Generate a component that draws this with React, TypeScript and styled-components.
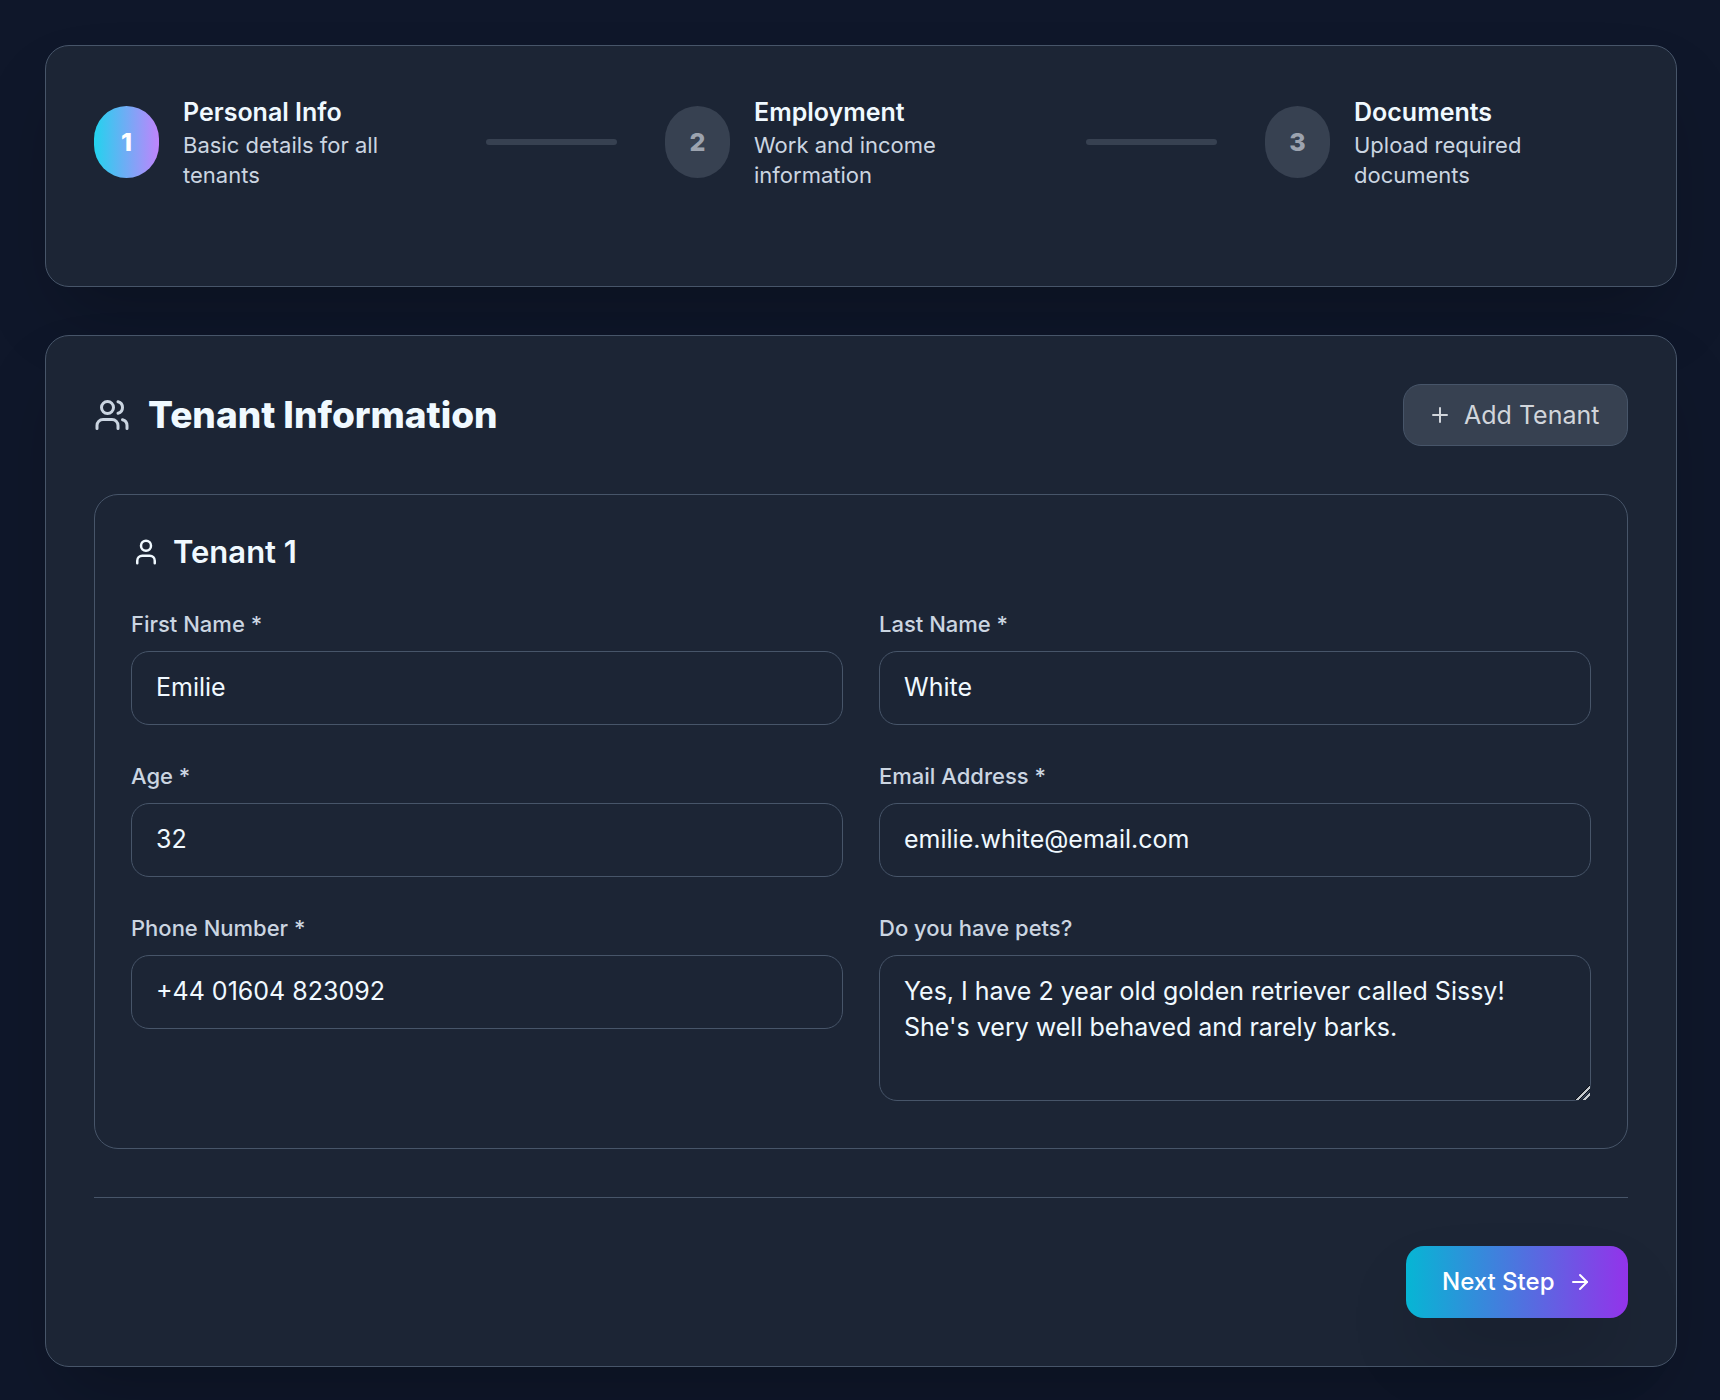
import React, { useId } from "react";
import styled, { createGlobalStyle, css } from "styled-components";
import { ArrowRight, Plus, User, Users } from "lucide-react";

const color = {
  page: "#0f172a",
  panel: "#1c2535",
  line: "#475569",
  heading: "#f0f9ff",
  body: "#cbd5e1",
  muted: "#374151",
  mutedText: "#9ca3af",
};

const GlobalStyle = createGlobalStyle`
  *, *::before, *::after { box-sizing: border-box; }
  body {
    margin: 0;
    background: ${color.page};
    color: ${color.heading};
    font-family: Inter, "Open Sans", sans-serif;
    font-size: 25px;
    line-height: 36px;
  }
  button, input, textarea { font: inherit; color: inherit; margin: 0; }
  h2, h3, p, ol { margin: 0; padding: 0; }
`;

const Page = styled.main`
  min-height: 100vh;
  padding: 45px 43px 33px 45px;
  display: flex;
  flex-direction: column;
  gap: 48px;
`;

const panel = css`
  border: 1px solid ${color.line};
  border-radius: 24px;
  background: ${color.panel};
`;

const Card = styled.section`
  ${panel}
  padding: 48px;
  box-shadow: 0 37px 75px -18px rgba(0, 0, 0, 0.25);
`;

const StepList = styled.ol`
  list-style: none;
  display: flex;
  align-items: center;
  margin-bottom: 48px;
`;

const StepItem = styled.li<{ $grow: number }>`
  flex: ${(p) => p.$grow} 1 0;
  min-width: 0;
  display: flex;
  align-items: center;
  gap: 24px;
`;

const StepBadge = styled.span<{ $active?: boolean }>`
  flex: none;
  width: 65px;
  height: 72px;
  border-radius: 50% / 46%;
  display: flex;
  align-items: center;
  justify-content: center;
  font-weight: 800;
  color: ${(p) => (p.$active ? "#ffffff" : color.mutedText)};
  background: ${(p) =>
    p.$active ? "linear-gradient(to right, #22d3ee, #c084fc)" : color.muted};
`;

const StepTitle = styled.h3`
  font-size: 25px;
  line-height: 36px;
  font-weight: 600;
`;

const StepText = styled.p`
  max-width: 240px;
  font-size: 22px;
  line-height: 30px;
  color: ${color.body};
`;

const Connector = styled.li`
  flex: 131 1 0;
  height: 6px;
  margin: 0 48px;
  border-radius: 3px;
  background: ${color.muted};
`;

const CardHeader = styled.header`
  display: flex;
  align-items: center;
  justify-content: space-between;
  margin-bottom: 48px;
`;

const CardTitle = styled.h2`
  display: flex;
  align-items: center;
  gap: 18px;
  font-size: 37px;
  line-height: 48px;
  font-weight: 800;

  svg { color: ${color.body}; }
`;

const AddButton = styled.button`
  min-width: 225px;
  display: flex;
  align-items: center;
  gap: 12px;
  padding: 12px 24px;
  border: 1px solid ${color.line};
  border-radius: 18px;
  background: ${color.muted};
  color: #d1d5db;
  cursor: pointer;
`;

const TenantCard = styled.fieldset`
  ${panel}
  min-width: 0;
  margin: 0;
  padding: 36px;
`;

const TenantTitle = styled.h3`
  display: flex;
  align-items: center;
  gap: 12px;
  margin-bottom: 36px;
  font-size: 31px;
  line-height: 42px;
  font-weight: 600;
`;

const FieldGrid = styled.div`
  display: grid;
  grid-template-columns: repeat(2, minmax(0, 1fr));
  gap: 36px;
`;

const FieldBox = styled.div`
  display: flex;
  flex-direction: column;
  gap: 12px;
`;

const Label = styled.label`
  font-size: 22px;
  line-height: 30px;
  font-weight: 500;
  color: ${color.body};
`;

const control = css`
  display: block;
  width: 100%;
  padding: 17px 24px 19px;
  border: 1px solid ${color.line};
  border-radius: 18px;
  background: ${color.panel};
  outline: none;

  &:focus-visible { border-color: #22d3ee; }
`;

const Input = styled.input`
  ${control}
  height: 74px;
`;

const TextArea = styled.textarea`
  ${control}
  height: 146px;
  margin-bottom: 11px;
  resize: vertical;

  &::-webkit-resizer {
    background: linear-gradient(
      135deg,
      transparent 10px,
      #0b0f18 10px 11px,
      #c4c8cc 11px 13px,
      #0b0f18 13px 14px,
      transparent 14px 16px,
      #c4c8cc 16px 18px,
      transparent 18px
    );
  }
`;

const Footer = styled.footer`
  display: flex;
  justify-content: flex-end;
  margin-top: 48px;
  padding-top: 48px;
  border-top: 1px solid ${color.line};
`;

const NextButton = styled.button`
  min-width: 222px;
  display: flex;
  align-items: center;
  justify-content: space-between;
  padding: 18px 36px;
  border: 0;
  border-radius: 18px;
  background: linear-gradient(to right, #06b6d4, #9333ea);
  box-shadow: 0 37px 75px -18px rgba(0, 0, 0, 0.25);
  color: #ffffff;
  font-size: 24px;
  font-weight: 500;
  cursor: pointer;
`;

const steps = [
  { title: "Personal Info", text: "Basic details for all tenants", grow: 344 },
  { title: "Employment", text: "Work and income information", grow: 373 },
  { title: "Documents", text: "Upload required documents", grow: 363 },
];

const fields = [
  { label: "First Name *", value: "Emilie", type: "text" },
  { label: "Last Name *", value: "White", type: "text" },
  { label: "Age *", value: "32", type: "text" },
  { label: "Email Address *", value: "emilie.white@email.com", type: "email" },
  { label: "Phone Number *", value: "+44 01604 823092", type: "tel" },
];

function Field({ label, value, type }: { label: string; value: string; type: string }) {
  const id = useId();
  return (
    <FieldBox>
      <Label htmlFor={id}>{label}</Label>
      <Input id={id} type={type} defaultValue={value} />
    </FieldBox>
  );
}

function Steps() {
  return (
    <StepList>
      {steps.map((step, i) => (
        <React.Fragment key={step.title}>
          {i > 0 && <Connector aria-hidden="true" />}
          <StepItem $grow={step.grow} aria-current={i === 0 ? "step" : undefined}>
            <StepBadge $active={i === 0}>{i + 1}</StepBadge>
            <div>
              <StepTitle>{step.title}</StepTitle>
              <StepText>{step.text}</StepText>
            </div>
          </StepItem>
        </React.Fragment>
      ))}
    </StepList>
  );
}

export default function App() {
  return (
    <>
      <GlobalStyle />
      <Page>
        <Card>
          <Steps />
        </Card>
        <Card as="form">
          <CardHeader>
            <CardTitle>
              <Users size={36} />
              Tenant Information
            </CardTitle>
            <AddButton type="button">
              <Plus size={24} />
              Add Tenant
            </AddButton>
          </CardHeader>
          <TenantCard aria-labelledby="tenant-1">
            <TenantTitle id="tenant-1">
              <User size={30} />
              Tenant 1
            </TenantTitle>
            <FieldGrid>
              {fields.map((f) => (
                <Field key={f.label} {...f} />
              ))}
              <FieldBox>
                <Label htmlFor="pets">Do you have pets?</Label>
                <TextArea
                  id="pets"
                  rows={3}
                  spellCheck={false}
                  defaultValue={
                    "Yes, I have 2 year old golden retriever called Sissy!\nShe's very well behaved and rarely barks."
                  }
                />
              </FieldBox>
            </FieldGrid>
          </TenantCard>
          <Footer>
            <NextButton type="button">
              Next Step
              <ArrowRight size={24} />
            </NextButton>
          </Footer>
        </Card>
      </Page>
    </>
  );
}
